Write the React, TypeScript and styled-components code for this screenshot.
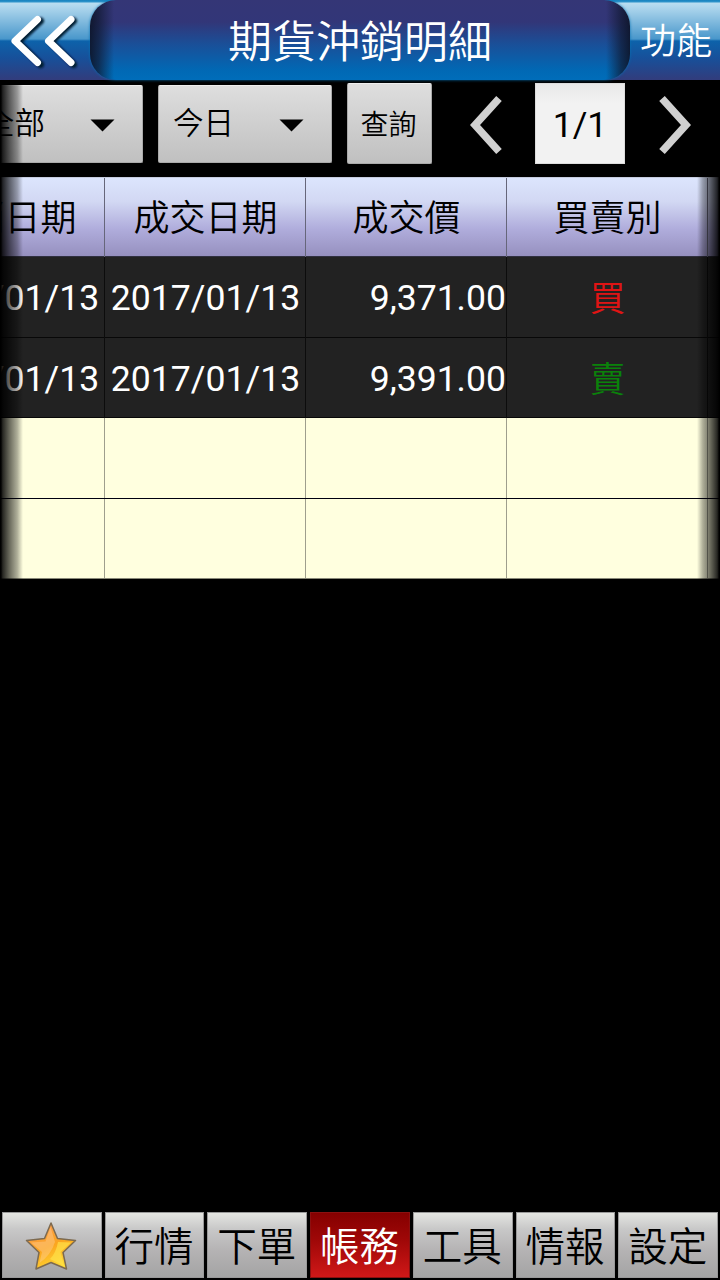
import React from "react";
import styled, { createGlobalStyle, css } from "styled-components";

const GlobalStyle = createGlobalStyle`
  * { box-sizing: border-box; }
  body {
    margin: 0;
    background: #000;
    font-family: Roboto, "Noto Sans CJK TC", sans-serif;
    overflow: hidden;
  }
  button { font-family: inherit; border: 0; padding: 0; }
`;

const Screen = styled.div`
  width: 720px;
  height: 1280px;
  display: flex;
  flex-direction: column;
  background: #000;
  overflow: hidden;
`;

const Header = styled.header`
  height: 80px;
  flex: none;
  display: grid;
  grid-template-columns: 90px 540px 90px;
  background: linear-gradient(#1482be 0, #2f95cb 2px, #b9def1 3px, #9fcde8 12px, #4997cb 39px, #0d62aa 41px, #17509a 58px, #323c7c 80px);
`;

const HeaderButton = styled.button`
  display: flex;
  align-items: center;
  justify-content: center;
  background: none;
  color: #fff;
  font-size: 36px;
  font-weight: 350;
  line-height: 80px;
  padding-left: 2px;
  padding-top: 2px;
  white-space: nowrap;
`;

const BackButton = styled(HeaderButton)`
  padding: 0 0 2px;
`;

const Title = styled.h1`
  margin: 0;
  height: 80px;
  border-radius: 26px;
  text-align: center;
  line-height: 87px;
  font-size: 44px;
  font-weight: 350;
  color: #fff;
  background:
    linear-gradient(90deg, #0d1428e6 0, #101830b0 9px, #10204000 24px, #10204000 516px, #101830b0 531px, #0d1428e6 540px),
    linear-gradient(#343676 0, #323678 22px, #1a4f98 44px, #0168b4 70px, #006dba 80px);
  box-shadow: 0 0 3px #0773b5;
`;

const Scroller = styled.div`
  position: relative;
  overflow: hidden;
  flex: none;
`;

const EdgeFade = styled.div<{ $side: "left" | "right"; $width: number }>`
  position: absolute;
  top: 0;
  bottom: 0;
  ${(p) => p.$side}: 0;
  width: ${(p) => p.$width}px;
  background: linear-gradient(
    to ${(p) => p.$side},
    #0000 0,
    #00000050 25%,
    #00000098 60%,
    #000000d8 88%,
    #000 96%
  );
`;

const Toolbar = styled.div`
  height: 97px;
  display: flex;
  padding-top: 3px;
`;

const metal = css`
  background: linear-gradient(#dedede, #c0c0c0);
  border: 1px solid #aaa;
  border-top-color: #eee;
  border-radius: 2px;
  color: #000;
`;

const Select = styled.button<{ $shift?: number }>`
  ${metal}
  flex: none;
  width: 174px;
  height: 78px;
  margin: 2px 15px 0 0;
  margin-left: ${(p) => p.$shift ?? 0}px;
  padding: 0 27px 6px 14px;
  display: flex;
  align-items: center;
  justify-content: space-between;
  font-size: 30.5px;
  font-weight: 350;
  svg { margin-top: 8px; }
`;

const QueryButton = styled.button`
  ${metal}
  width: 85px;
  height: 81px;
  padding: 0 2px 2px 0;
  font-size: 28px;
  font-weight: 350;
`;

const PageBox = styled.div`
  width: 90px;
  height: 81px;
  background: linear-gradient(#e8e8e8, #f2f2f2 20px);
  border: 1px solid #ddd;
  text-align: center;
  font-size: 35.5px;
  line-height: 82px;
  color: #000;
`;

const ArrowButton = styled.button<{ $left: number; $right: number }>`
  width: 32px;
  height: 84px;
  margin-left: ${(p) => p.$left}px;
  margin-right: ${(p) => p.$right}px;
  background: none;
  display: flex;
  align-items: center;
`;

const Table = styled.div`
  width: 1005px;
  margin-left: -96px;
`;

const cols = css`
  display: grid;
  grid-template-columns: 201px 201px 201px 201px 201px;
`;

const HeadRow = styled.div`
  ${cols}
  height: 80px;
  background: linear-gradient(#dce5fd, #d2d8f3 30%, #b0addc 65%, #9690bf);
  border-top: 1px solid #c6ccdf;
  border-bottom: 1px solid #303040;
`;

const Row = styled.div<{ $tone: "dark" | "cream"; $height: number; $line: string }>`
  ${cols}
  height: ${(p) => p.$height}px;
  background: ${(p) => (p.$tone === "dark" ? "#222" : "#ffffdf")};
  border-bottom: 1px solid ${(p) => p.$line};
`;

const Cell = styled.div<{ $align?: string; $color?: string; $line: string }>`
  border-right: 1px solid ${(p) => p.$line};
  text-align: ${(p) => p.$align ?? "center"};
  color: ${(p) => p.$color ?? "#fff"};
  font-size: 35.6px;
  line-height: 83px;
  padding-left: 1px;
  white-space: nowrap;
`;

const HeadCell = styled(Cell)`
  font-size: 36px;
  font-weight: 350;
  line-height: 82px;
`;

const Side = styled.span`
  font-weight: 350;
  line-height: 84px;
  display: block;
`;

const Spacer = styled.main`
  flex: 1;
`;

const TabBar = styled.nav`
  flex: none;
  height: 68px;
  display: grid;
  grid-template-columns: repeat(7, 1fr);
  column-gap: 3px;
  padding: 0 2px 2px;
`;

const Tab = styled.button<{ $active?: boolean }>`
  display: flex;
  align-items: center;
  justify-content: center;
  height: 66px;
  padding: 0 1px 3px 0;
  font-size: 39.5px;
  font-weight: 350;
  white-space: nowrap;
  color: ${(p) => (p.$active ? "#fff" : "#000")};
  border: 1px solid ${(p) => (p.$active ? "#8c1010" : "#999")};
  background: ${(p) =>
    p.$active
      ? "linear-gradient(#850000, #a10808 45%, #d01818)"
      : "linear-gradient(#e4e5e1, #c8c8c8 25%, #b4b2b3 60%, #a4a4a4)"};
  svg { margin-top: 4px; }
`;

const Caret = () => (
  <svg width="25" height="13" viewBox="0 0 25 13">
    <path d="M0.5 0.5H24.5L12.5 12.5Z" fill="#000" />
  </svg>
);

const Chevron = ({ right }: { right?: boolean }) => (
  <svg width="32" height="60" viewBox="0 0 32 60">
    <path
      d={right ? "M3 3.5L27 30L3 56.5" : "M29 3.5L5 30L29 56.5"}
      fill="none"
      stroke="#d0d0d0"
      strokeWidth="7.5"
    />
  </svg>
);

const BackIcon = () => (
  <svg width="90" height="80" viewBox="0 0 90 80" fill="none" strokeWidth="7" strokeLinejoin="round" strokeLinecap="round">
    <defs>
      <filter id="soft" x="-20%" y="-20%" width="140%" height="140%">
        <feGaussianBlur stdDeviation="1.3" />
      </filter>
    </defs>
    <g stroke="#001b33" filter="url(#soft)">
      <path d="M40.5 21L18 42L40.5 64.5" />
      <path d="M73.5 21L51 42L73.5 64.5" />
    </g>
    <g stroke="#fff">
      <path d="M37.5 19.5L15 41L37.5 62.5" />
      <path d="M71 19.5L48.5 41L71 62.5" />
    </g>
  </svg>
);

const StarIcon = () => (
  <svg width="52" height="50" viewBox="0 0 52 50">
    <defs>
      <linearGradient id="gold" x1="0.25" y1="0" x2="0.75" y2="1">
        <stop offset="0" stopColor="#f99a55" />
        <stop offset="0.5" stopColor="#fba51f" />
        <stop offset="1" stopColor="#ffe338" />
      </linearGradient>
    </defs>
    <path
      d="M26 2L32.5 17.5L50.5 19.5L38 31.5L41.5 48L26 41.5L11 48L14 31.5L1.500 19.5L19.5 17.5Z"
      fill="url(#gold)"
      stroke="#7c6a50"
      strokeWidth="1.5"
      strokeLinejoin="round"
    />
    <path d="M25.5 6L20.5 20.5L6 21.5L17 31L14.500 42Q26 34 30 21Z" fill="#ffd2a0" opacity="0.4" />
    <path d="M25 38Q31 32 33 21L46 21.5L35.500 31L39 45Z" fill="#ffe34c" opacity="0.65" />
  </svg>
);

const heads = ["沖銷日期", "成交日期", "成交價", "買賣別", ""];
const trades = [
  { date: "2017/01/13", price: "9,371.00", side: "買", color: "#e01414", height: 81, line: "#080808" },
  { date: "2017/01/13", price: "9,391.00", side: "賣", color: "#0a820a", height: 80, line: "#080808" },
];
const tabs = ["", "行情", "下單", "帳務", "工具", "情報", "設定"];

export default function App() {
  return (
    <Screen>
      <GlobalStyle />
      <Header>
        <BackButton aria-label="返回"><BackIcon /></BackButton>
        <Title>期貨沖銷明細</Title>
        <HeaderButton>功能</HeaderButton>
      </Header>
      <Scroller>
        <Toolbar>
          <Select $shift={-31}>全部<Caret /></Select>
          <Select>今日<Caret /></Select>
          <QueryButton>查詢</QueryButton>
          <ArrowButton $left={38} $right={33} aria-label="上一頁"><Chevron /></ArrowButton>
          <PageBox>1/1</PageBox>
          <ArrowButton $left={34} $right={0} aria-label="下一頁"><Chevron right /></ArrowButton>
        </Toolbar>
        <EdgeFade $side="left" $width={23} />
      </Scroller>
      <Scroller>
        <Table>
          <HeadRow>
            {heads.map((h, i) => (
              <HeadCell key={i} $color="#000" $line="#66667a">{h}</HeadCell>
            ))}
          </HeadRow>
          {trades.map((t) => (
            <Row key={t.price} $tone="dark" $height={t.height} $line={t.line}>
              <Cell $line="#0c0c0c">{t.date}</Cell>
              <Cell $line="#0c0c0c">{t.date}</Cell>
              <Cell $line="#0c0c0c" $align="right">{t.price}</Cell>
              <Cell $line="#0c0c0c" $color={t.color}><Side>{t.side}</Side></Cell>
              <Cell $line="#0c0c0c" />
            </Row>
          ))}
          <Row $tone="cream" $height={81} $line="#000010">
            {heads.map((_, i) => <Cell key={i} $line="#9f9f8d" />)}
          </Row>
          <Row $tone="cream" $height={80} $line="#888878">
            {heads.map((_, i) => <Cell key={i} $line="#9f9f8d" />)}
          </Row>
        </Table>
        <EdgeFade $side="left" $width={23} />
        <EdgeFade $side="right" $width={23} />
      </Scroller>
      <Spacer />
      <TabBar>
        {tabs.map((t) => (
          <Tab key={t} $active={t === "帳務"} aria-label={t || "自選"}>{t || <StarIcon />}</Tab>
        ))}
      </TabBar>
    </Screen>
  );
}
